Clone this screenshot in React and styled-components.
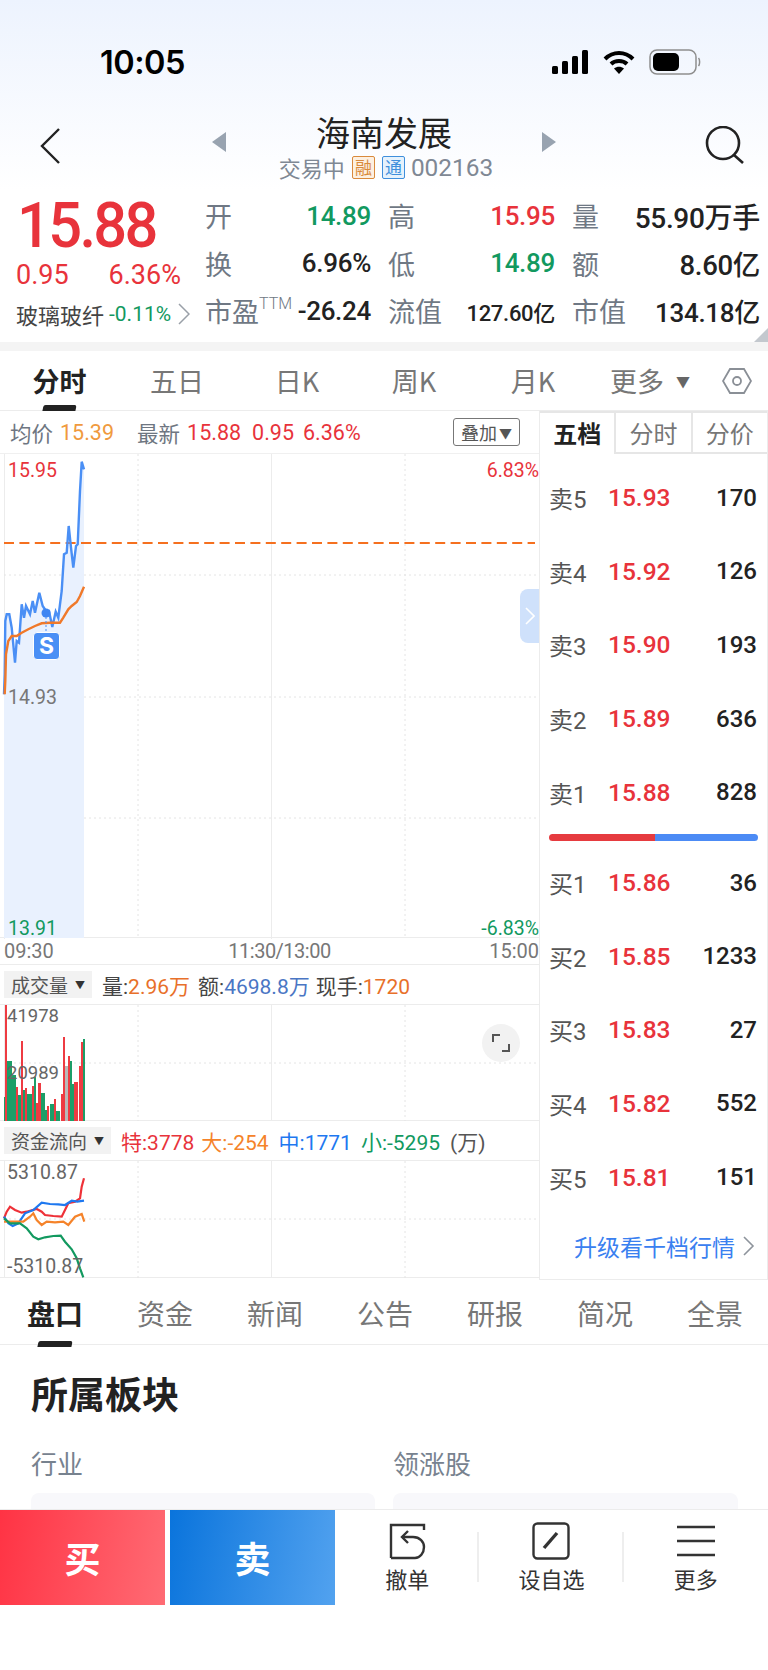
import React from "react";
import styled, { createGlobalStyle } from "styled-components";

const RED = "#e8333b";
const GREEN = "#12995f";
const GRAY = "#6e7681";
const DARK = "#222";
const LINE = "#ececec";

const GlobalStyle = createGlobalStyle`
    html, body {
        margin: 0;
        padding: 0;
        background: #fff;
    }
    * {
        box-sizing: border-box;
    }
`;

// points were read off 3x crops of the screen, so they go back through this
const pts = (list, top) =>
    list.map(([x, y]) => `${(x / 3).toFixed(1)},${(y / 3 + top).toFixed(1)}`).join(" ");

const PRICE_LINE = [[12,760],[14,700],[16,540],[20,520],[28,520],[35,560],[45,665],[50,600],[57,605],[65,490],[72,530],[78,495],[90,520],[98,480],[105,515],[118,455],[128,495],[138,510],[147,510],[157,558],[167,512],[175,530],[185,450],[192,340],[200,335],[206,255],[213,320],[220,380],[228,315],[233,310],[240,150],[245,62],[252,85]];
const AVG_LINE = [[14,760],[16,720],[18,640],[25,600],[35,585],[50,585],[65,575],[85,565],[105,555],[125,547],[150,545],[180,545],[190,530],[205,505],[215,495],[230,483],[240,465],[252,437]];

const VOLUME = [
    [12,16,320,"g"],[16,21,45,"r"],[22,35,212,"g"],[30,47,255,"g"],[47,55,290,"r"],[55,62,315,"g"],
    [62,68,153,"r"],[68,76,300,"g"],[76,82,295,"r"],[82,95,312,"g"],[96,102,288,"r"],[102,108,260,"g"],
    [108,115,338,"r"],[115,122,278,"r"],[122,135,310,"g"],[135,141,360,"g"],[141,148,347,"r"],[149,162,342,"g"],
    [162,168,327,"r"],[169,181,362,"g"],[182,189,313,"r"],[189,195,140,"r"],[195,203,227,"n"],[203,209,198,"r"],
    [209,215,213,"g"],[215,222,282,"g"],[222,235,277,"r"],[236,242,227,"r"],[242,249,157,"r"],[249,255,148,"g"],
];
const BAR_COLORS = { r: "#ee3b42", g: "#1c9e68", n: "#b9b9b9" };

const FLOW = [
    ["#ee3138", [[12,685],[20,665],[30,650],[45,660],[65,668],[80,665],[90,662],[110,657],[125,665],[135,675],[160,678],[185,680],[195,660],[205,640],[225,635],[240,625],[245,590],[252,565]]],
    ["#1e78f0", [[12,680],[25,700],[38,708],[55,700],[75,670],[100,660],[125,638],[150,642],[175,643],[195,645],[215,632],[232,635],[252,632]]],
    ["#f5832a", [[12,695],[30,695],[50,695],[70,695],[90,680],[100,670],[110,690],[125,705],[140,695],[165,697],[190,695],[205,705],[225,680],[245,672],[253,695]]],
    ["#12995f", [[12,685],[30,700],[60,700],[80,715],[100,740],[115,748],[135,742],[160,738],[182,737],[195,755],[215,778],[230,805],[240,835],[250,862]]],
];

const SELL = [["卖5", "15.93", "170"], ["卖4", "15.92", "126"], ["卖3", "15.90", "193"], ["卖2", "15.89", "636"], ["卖1", "15.88", "828"]];
const BUY = [["买1", "15.86", "36"], ["买2", "15.85", "1233"], ["买3", "15.83", "27"], ["买4", "15.82", "552"], ["买5", "15.81", "151"]];

function GridLines({ height, rows }) {
    return (
        <ChartSvg width="538" height={height}>
            {[138, 405].map((x) => (
                <line key={x} x1={x} x2={x} y1="0" y2={height} stroke="#e4e4e4" strokeDasharray="2 3" />
            ))}
            <line x1="271.5" x2="271.5" y1="0" y2={height} stroke="#ececec" />
            <line x1="4.5" x2="4.5" y1="0" y2={height} stroke="#ececec" />
            {rows.map((y) => (
                <line key={y} x1="4" x2="538" y1={y} y2={y} stroke="#e4e4e4" strokeDasharray="2 3" />
            ))}
        </ChartSvg>
    );
}

function DepthRows({ rows, top }) {
    return (
        <DepthList $top={top}>
            {rows.map(([name, price, qty]) => (
                <DepthRow key={name}>
                    <DepthName>{name}</DepthName>
                    <DepthPrice>{price}</DepthPrice>
                    <DepthQty>{qty}</DepthQty>
                </DepthRow>
            ))}
        </DepthList>
    );
}

export default function App() {
    return (
        <Page>
            <GlobalStyle />
            <Top>
                <StatusBar>
                    <Clock>10:05</Clock>
                    <StatusIcons>
                        <svg width="37" height="24" viewBox="0 0 37 24">
                            <rect x="0" y="16" width="6" height="8" rx="1.5" />
                            <rect x="10" y="11" width="6" height="13" rx="1.5" />
                            <rect x="20" y="6" width="6" height="18" rx="1.5" />
                            <rect x="30" y="0" width="6" height="24" rx="1.5" />
                        </svg>
                        <svg width="32" height="24" viewBox="0 0 32 24" fill="none" stroke="#000" strokeWidth="4">
                            <path d="M2 9 C10 1 22 1 30 9" />
                            <path d="M8 14 C12 10 20 10 24 14" />
                            <path d="M16 24 L11 18.5 C14 16 18 16 21 18.5 Z" fill="#000" stroke="none" />
                        </svg>
                        <svg width="52" height="26" viewBox="0 0 52 26" fill="none">
                            <rect x="1" y="1" width="46" height="24" rx="7" stroke="#8e8e8e" strokeWidth="1.5" />
                            <rect x="4" y="4" width="26" height="18" rx="5" fill="#000" />
                            <path d="M49.5 9 C51 10.5 51 15.5 49.5 17" stroke="#8e8e8e" strokeWidth="1.5" />
                        </svg>
                    </StatusIcons>
                </StatusBar>
                <Nav>
                    <NavIcon>
                        <svg width="20" height="36" viewBox="0 0 20 36" fill="none" stroke="#222" strokeWidth="2.4">
                            <path d="M19 1 L2 18 L19 35" />
                        </svg>
                    </NavIcon>
                    <Title>
                        <Triangle $dir="left" />
                        <TitleText>
                            <StockName>海南发展</StockName>
                            <SubLine>
                                <span>交易中</span>
                                <Badge $color="#d98a3c" $bg="#fdf0e1">融</Badge>
                                <Badge $color="#3f8fdc" $bg="#e6f2fc">通</Badge>
                                <Code>002163</Code>
                            </SubLine>
                        </TitleText>
                        <Triangle $dir="right" />
                    </Title>
                    <SearchSlot>
                        <svg width="40" height="38" viewBox="0 0 40 38" fill="none" stroke="#222" strokeWidth="2.6">
                            <circle cx="18" cy="17" r="16" />
                            <path d="M29 29 L38 37" />
                        </svg>
                    </SearchSlot>
                </Nav>
                <Quote>
                    <PriceBlock>
                        <BigPrice>15.88</BigPrice>
                        <ChangeRow>
                            <span>0.95</span>
                            <span>6.36%</span>
                        </ChangeRow>
                        <SectorRow>
                            <span>玻璃玻纤</span>
                            <SectorPct>-0.11%</SectorPct>
                            <svg width="12" height="22" viewBox="0 0 12 22" fill="none" stroke="#9aa0a8" strokeWidth="1.5">
                                <path d="M1 1 L11 11 L1 21" />
                            </svg>
                        </SectorRow>
                    </PriceBlock>
                    <QuoteGrid>
                        <QuoteCell>
                            <QuoteLabel>开</QuoteLabel>
                            <QuoteValue $color={GREEN}>14.89</QuoteValue>
                        </QuoteCell>
                        <QuoteCell>
                            <QuoteLabel>高</QuoteLabel>
                            <QuoteValue $color={RED}>15.95</QuoteValue>
                        </QuoteCell>
                        <QuoteCell>
                            <QuoteLabel>量</QuoteLabel>
                            <QuoteValue $color={DARK} $size={28}>55.90万手</QuoteValue>
                        </QuoteCell>
                        <QuoteCell>
                            <QuoteLabel>换</QuoteLabel>
                            <QuoteValue $color={DARK}>6.96%</QuoteValue>
                        </QuoteCell>
                        <QuoteCell>
                            <QuoteLabel>低</QuoteLabel>
                            <QuoteValue $color={GREEN}>14.89</QuoteValue>
                        </QuoteCell>
                        <QuoteCell>
                            <QuoteLabel>额</QuoteLabel>
                            <QuoteValue $color={DARK} $size={27.5}>8.60亿</QuoteValue>
                        </QuoteCell>
                        <QuoteCell>
                            <QuoteLabel>
                                市盈<Ttm>TTM</Ttm>
                            </QuoteLabel>
                            <QuoteValue $color={DARK}>-26.24</QuoteValue>
                        </QuoteCell>
                        <QuoteCell>
                            <QuoteLabel>流值</QuoteLabel>
                            <QuoteValue $color={DARK} $size={22}>127.60亿</QuoteValue>
                        </QuoteCell>
                        <QuoteCell>
                            <QuoteLabel>市值</QuoteLabel>
                            <QuoteValue $color={DARK}>134.18亿</QuoteValue>
                        </QuoteCell>
                    </QuoteGrid>
                    <CornerMark />
                </Quote>
            </Top>
            <Band />
            <PeriodTabs>
                <PeriodTab $width={119} $active>
                    分时
                    <Underline $w={33} />
                </PeriodTab>
                <PeriodTab $width={116}>五日</PeriodTab>
                <PeriodTab $width={124}>日K</PeriodTab>
                <PeriodTab $width={110}>周K</PeriodTab>
                <PeriodTab $width={128}>月K</PeriodTab>
                <PeriodTab $width={106}>
                    更多<MoreArrow>▼</MoreArrow>
                </PeriodTab>
                <HexIcon width="30" height="30" viewBox="0 0 30 30" fill="none" stroke="#8a8f96" strokeWidth="1.8">
                    <path d="M8 3 H22 L29 15 L22 27 H8 L1 15 Z" />
                    <circle cx="15" cy="15" r="4" />
                </HexIcon>
            </PeriodTabs>
            <Market>
                <ChartColumn>
                    <InfoRow>
                        <Info $color={GRAY}>均价</Info>
                        <Info $color="#f09a3e" $gap={7}>15.39</Info>
                        <Info $color={GRAY} $gap={23}>最新</Info>
                        <Info $color={RED} $gap={7}>15.88</Info>
                        <Info $color={RED} $gap={11}>0.95</Info>
                        <Info $color={RED} $gap={9}>6.36%</Info>
                        <OverlayButton>
                            叠加<span>▼</span>
                        </OverlayButton>
                    </InfoRow>
                    <MainPane>
                        <GridLines height={485} rows={[121, 243, 364]} />
                        <ChartSvg width="538" height="485">
                            <polygon points={`${pts(PRICE_LINE, -13)} 84,484 4,484`} fill="#e9f1fe" />
                            <line x1="4" x2="535" y1="89" y2="89" stroke="#f5701f" strokeWidth="2" strokeDasharray="10 5.4" />
                            <polyline points={pts(PRICE_LINE, -13)} fill="none" stroke="#4a8ff5" strokeWidth="2.4" />
                            <polyline points={pts(AVG_LINE, -13)} fill="none" stroke="#f0792a" strokeWidth="2.4" />
                            <circle cx="46" cy="159" r="4.5" fill="#3f86f2" />
                            <path d="M46 163 V178" stroke="#4a8ff5" strokeDasharray="2 2" />
                        </ChartSvg>
                        <SignalTag>S</SignalTag>
                        <AxisLabel $color={RED} $top={5} $left={8}>15.95</AxisLabel>
                        <AxisLabel $color={RED} $top={5} $right={0}>6.83%</AxisLabel>
                        <AxisLabel $color="#777" $top={232} $left={8}>14.93</AxisLabel>
                        <AxisLabel $color={GREEN} $top={463} $left={8}>13.91</AxisLabel>
                        <AxisLabel $color={GREEN} $top={463} $right={0}>-6.83%</AxisLabel>
                        <Handle>
                            <svg width="10" height="18" viewBox="0 0 10 18" fill="none" stroke="#fff" strokeWidth="1.6">
                                <path d="M1 1 L9 9 L1 17" />
                            </svg>
                        </Handle>
                    </MainPane>
                    <TimeAxis>
                        <span>09:30</span>
                        <MidTime>11:30/13:00</MidTime>
                        <span>15:00</span>
                    </TimeAxis>
                    <PaneHeader>
                        <Dropdown $width={88}>
                            成交量<small>▼</small>
                        </Dropdown>
                        <Stat $gap={10}>量:<Num $color="#e8702a">2.96万</Num></Stat>
                        <Stat $gap={8}>额:<Num $color="#4a76c4">4698.8万</Num></Stat>
                        <Stat $gap={6}>现手:<Num $color="#e8702a">1720</Num></Stat>
                    </PaneHeader>
                    <SubPane $height={116}>
                        <GridLines height={116} rows={[58]} />
                        <ChartSvg width="538" height="116" shapeRendering="crispEdges">
                            {VOLUME.map(([a, b, top, c]) => (
                                <rect key={a} x={a / 3} y={top / 3 - 15} width={(b - a) / 3} height={(393 - top) / 3} fill={BAR_COLORS[c]} />
                            ))}
                        </ChartSvg>
                        <SmallLabel $top={1}>41978</SmallLabel>
                        <SmallLabel $top={58}>20989</SmallLabel>
                        <ExpandButton>
                            <svg width="18" height="18" viewBox="0 0 18 18" fill="none" stroke="#555" strokeWidth="2">
                                <path d="M1 8 V1 H8 M17 10 V17 H10" />
                            </svg>
                        </ExpandButton>
                    </SubPane>
                    <PaneHeader>
                        <Dropdown $width={107}>
                            资金流向<small>▼</small>
                        </Dropdown>
                        <Num $color="#e8333b" $gap={10}>特:3778</Num>
                        <Num $color="#f5832a" $gap={7}>大:-254</Num>
                        <Num $color="#1e78f0" $gap={10}>中:1771</Num>
                        <Num $color="#12995f" $gap={9}>小:-5295</Num>
                        <Num $color="#555" $gap={10}>(万)</Num>
                    </PaneHeader>
                    <SubPane $height={117}>
                        <GridLines height={117} rows={[58]} />
                        <ChartSvg width="538" height="117">
                            {FLOW.map(([color, list]) => (
                                <polyline key={color} points={pts(list, -171)} fill="none" stroke={color} strokeWidth="2.2" />
                            ))}
                        </ChartSvg>
                        <SmallLabel $top={2} $size={19.5}>5310.87</SmallLabel>
                        <SmallLabel $top={96} $size={19.5}>-5310.87</SmallLabel>
                    </SubPane>
                </ChartColumn>
                <DepthPanel>
                    <DepthTabs>
                        <DepthTab $active>五档</DepthTab>
                        <DepthTab>分时</DepthTab>
                        <DepthTab>分价</DepthTab>
                    </DepthTabs>
                    <DepthRows rows={SELL} top={7} />
                    <RatioBar>
                        <RatioPart $color="#e63b3f" style={{ width: "50.5%" }} />
                        <RatioPart $color="#4c8bf5" style={{ width: "49.5%" }} />
                    </RatioBar>
                    <DepthRows rows={BUY} top={5} />
                    <UpgradeLink>
                        升级看千档行情
                        <svg width="13" height="20" viewBox="0 0 13 20" fill="none" stroke="#8e949c" strokeWidth="1.6">
                            <path d="M2 1 L11 10 L2 19" />
                        </svg>
                    </UpgradeLink>
                </DepthPanel>
            </Market>
            <InfoTabs>
                <InfoTab $active>
                    盘口
                    <Underline $w={34} />
                </InfoTab>
                <InfoTab>资金</InfoTab>
                <InfoTab>新闻</InfoTab>
                <InfoTab>公告</InfoTab>
                <InfoTab>研报</InfoTab>
                <InfoTab>简况</InfoTab>
                <InfoTab>全景</InfoTab>
            </InfoTabs>
            <Sector>
                <SectionTitle>所属板块</SectionTitle>
                <Columns>
                    <Column>
                        <ColumnLabel>行业</ColumnLabel>
                        <Card />
                    </Column>
                    <Column>
                        <ColumnLabel>领涨股</ColumnLabel>
                        <Card />
                    </Column>
                </Columns>
            </Sector>
            <ActionBar>
                <TradeButton $from="#ff3344" $to="#ff6b74">买</TradeButton>
                <TradeButton $from="#0a74dc" $to="#52a2ef">卖</TradeButton>
                <Action>
                    <svg width="38" height="38" viewBox="0 0 38 38" fill="none" stroke="#333" strokeWidth="2.4">
                        <path d="M3 36 V3 H36 V8 M3 36 H27" />
                        <path d="M20 9 L14 15 L20 21" />
                        <path d="M14 15 H25 C32 15 36 20 36 25 C36 31 32 36 27 36" />
                    </svg>
                    <ActionLabel>撤单</ActionLabel>
                </Action>
                <Divider />
                <Action>
                    <svg width="38" height="38" viewBox="0 0 38 38" fill="none" stroke="#333" strokeWidth="2.4">
                        <rect x="1.5" y="1.5" width="35" height="35" rx="4" />
                        <path d="M12 26 L25 11" strokeWidth="3.4" />
                    </svg>
                    <ActionLabel>设自选</ActionLabel>
                </Action>
                <Divider />
                <Action>
                    <svg width="38" height="38" viewBox="0 0 38 38" fill="none" stroke="#333" strokeWidth="2.6">
                        <path d="M0 5 H38 M0 19 H38 M0 33 H38" />
                    </svg>
                    <ActionLabel>更多</ActionLabel>
                </Action>
            </ActionBar>
        </Page>
    );
}

const CJK = `"Noto Sans CJK SC", sans-serif`;
const NUM = `Roboto, "Noto Sans CJK SC", sans-serif`;

const Page = styled.div`
    width: 768px;
    height: 1670px;
    overflow: hidden;
    background: #fff;
    font-family: ${NUM};
    color: ${DARK};
`;

const Top = styled.div`
    background: linear-gradient(180deg, #edf3fe 0%, #ffffff 100%);
    background-size: 100% 190px;
    background-repeat: no-repeat;
`;

const StatusBar = styled.div`
    display: flex;
    justify-content: space-between;
    align-items: center;
    height: 124px;
    padding: 0 67px 0 100px;
    margin-bottom: -14px;
`;

const Clock = styled.div`
    font-family: Inter, sans-serif;
    font-size: 32.5px;
    font-weight: 600;
    color: #000;
    letter-spacing: -0.5px;
`;

const StatusIcons = styled.div`
    display: flex;
    align-items: center;
    gap: 14px;
    fill: #000;
`;

const Nav = styled.div`
    display: grid;
    grid-template-columns: 172px 344px 1fr;
    align-items: start;
    height: 80px;
    padding: 2px 0 0 40px;
`;

const NavIcon = styled.div`
    display: flex;
    margin-top: 16px;
`;

const Title = styled.div`
    display: flex;
    align-items: flex-start;
    justify-content: space-between;
`;

const Triangle = styled.div`
    width: 0;
    height: 0;
    margin-top: 20px;
    border-top: 10px solid transparent;
    border-bottom: 10px solid transparent;
    ${(p) => (p.$dir === "left" ? "border-right" : "border-left")}: 14px solid #98a3b0;
`;

const TitleText = styled.div`
    display: flex;
    flex-direction: column;
    align-items: center;
`;

const StockName = styled.div`
    font-family: ${CJK};
    font-size: 34px;
    line-height: 40px;
    color: #222;
`;

const SubLine = styled.div`
    display: flex;
    align-items: center;
    height: 24px;
    margin-top: 3px;
    padding-left: 4px;
    font-family: ${CJK};
    font-size: 22px;
    color: #7f8894;
`;

const Badge = styled.span`
    width: 23px;
    height: 23px;
    margin-left: 7px;
    border: 1px solid ${(p) => p.$color};
    border-radius: 2px;
    background: ${(p) => p.$bg};
    color: ${(p) => p.$color};
    font-size: 17px;
    line-height: 20px;
    text-align: center;
`;

const Code = styled.span`
    margin-left: 6px;
    font-family: Roboto, sans-serif;
    font-size: 24.4px;
`;

const SearchSlot = styled.div`
    display: flex;
    margin-top: 14px;
    padding-left: 149px;
`;

const Quote = styled.div`
    position: relative;
    display: flex;
    height: 152px;
    padding: 2px 8px 0 16px;
`;

const PriceBlock = styled.div`
    width: 190px;
    display: flex;
    flex-direction: column;
`;

const BigPrice = styled.div`
    height: 63px;
    margin-left: 1px;
    font-size: 63px;
    line-height: 68px;
    font-weight: 500;
    color: ${RED};
    letter-spacing: -2.8px;
    transform: scaleX(0.945);
    transform-origin: left center;
`;

const ChangeRow = styled.div`
    display: flex;
    justify-content: space-between;
    width: 165px;
    height: 40px;
    font-size: 27px;
    line-height: 40px;
    color: ${RED};
`;

const SectorRow = styled.div`
    display: flex;
    align-items: center;
    height: 38px;
    font-family: ${CJK};
    font-size: 22px;
    color: #444;
    svg {
        margin-left: 7px;
    }
`;

const SectorPct = styled.span`
    margin-left: 5px;
    font-family: Roboto, sans-serif;
    font-size: 21px;
    color: ${GREEN};
`;

const QuoteGrid = styled.div`
    flex: 1;
    display: grid;
    grid-template-columns: 166px 167px 188px;
    column-gap: 17px;
    grid-auto-rows: 47.5px;
`;

const QuoteCell = styled.div`
    display: flex;
    justify-content: space-between;
    align-items: center;
`;

const QuoteLabel = styled.span`
    display: flex;
    font-family: ${CJK};
    font-size: 27px;
    color: #6f7884;
`;

const Ttm = styled.span`
    font-family: Roboto, sans-serif;
    font-size: 16px;
    font-weight: 300;
    line-height: 26px;
`;

const QuoteValue = styled.span`
    font-family: ${NUM};
    font-size: ${(p) => p.$size || 26}px;
    font-weight: 500;
    color: ${(p) => p.$color};
    letter-spacing: -0.3px;
`;

const CornerMark = styled.div`
    position: absolute;
    right: 0;
    bottom: 0;
    width: 0;
    height: 0;
    border-left: 14px solid transparent;
    border-bottom: 14px solid #c3c8ce;
`;

const Band = styled.div`
    height: 9px;
    background: #f4f4f4;
`;

const PeriodTabs = styled.div`
    display: flex;
    align-items: center;
    height: 60px;
    border-bottom: 1px solid ${LINE};
`;

const PeriodTab = styled.div`
    position: relative;
    display: flex;
    align-items: center;
    justify-content: center;
    width: ${(p) => p.$width}px;
    height: 59px;
    flex: none;
    font-family: ${CJK};
    font-size: 27px;
    font-weight: ${(p) => (p.$active ? 700 : 400)};
    color: ${(p) => (p.$active ? "#222" : "#777")};
`;

const Underline = styled.div`
    position: absolute;
    left: 50%;
    bottom: -1px;
    width: ${(p) => p.$w}px;
    height: 6px;
    margin-left: -${(p) => p.$w / 2}px;
    background: #222;
    border-radius: 2px 2px 0 0;
    transform: skewX(-12deg);
`;

const MoreArrow = styled.span`
    margin-left: 12px;
    font-size: 14px;
    line-height: 1;
    color: #666;
`;

const HexIcon = styled.svg`
    margin-left: 19px;
`;

const Market = styled.div`
    display: flex;
    height: 869px;
`;

const ChartColumn = styled.div`
    width: 539px;
    flex: none;
`;

const InfoRow = styled.div`
    display: flex;
    align-items: center;
    height: 42px;
    padding-left: 10px;
`;

const Info = styled.span`
    margin-left: ${(p) => p.$gap || 0}px;
    font-size: 21.5px;
    color: ${(p) => p.$color};
`;

const OverlayButton = styled.div`
    display: flex;
    align-items: center;
    justify-content: center;
    width: 67px;
    height: 28px;
    margin-left: auto;
    margin-right: 19px;
    border: 1px solid #777;
    border-radius: 3px;
    font-family: ${CJK};
    font-size: 18px;
    color: #555;
    span {
        font-size: 13px;
        margin-left: 2px;
    }
`;

const MainPane = styled.div`
    position: relative;
    height: 485px;
    border-top: 1px solid #f0f0f0;
    border-bottom: 1px solid ${LINE};
`;

const ChartSvg = styled.svg`
    position: absolute;
    left: 0;
    top: 0;
`;

const SignalTag = styled.div`
    position: absolute;
    left: 33px;
    top: 178px;
    width: 27px;
    height: 28px;
    border-radius: 4px;
    background: #4a8ff5;
    border: 1px solid #fff;
    color: #fff;
    font-family: Inter, sans-serif;
    font-size: 23px;
    font-weight: 700;
    line-height: 26px;
    text-align: center;
`;

const AxisLabel = styled.span`
    position: absolute;
    top: ${(p) => p.$top}px;
    ${(p) => (p.$left !== undefined ? `left: ${p.$left}px;` : `right: ${p.$right}px;`)}
    font-size: 19.5px;
    line-height: 23px;
    color: ${(p) => p.$color};
`;

const SmallLabel = styled.span`
    position: absolute;
    top: ${(p) => p.$top}px;
    left: 7px;
    font-size: ${(p) => p.$size || 18.5}px;
    line-height: 20px;
    color: #666;
`;

const Handle = styled.div`
    position: absolute;
    right: 0;
    top: 135px;
    width: 19px;
    height: 54px;
    display: flex;
    align-items: center;
    justify-content: center;
    background: #cfe1fb;
    border-radius: 8px 0 0 8px;
`;

const TimeAxis = styled.div`
    display: flex;
    justify-content: space-between;
    align-items: center;
    height: 27px;
    padding-left: 4px;
    font-size: 20px;
    color: #777;
    border-bottom: 1px solid ${LINE};
`;

const MidTime = styled.span`
    margin-left: 16px;
    letter-spacing: -0.5px;
`;

const PaneHeader = styled.div`
    display: flex;
    align-items: center;
    height: 40px;
    padding-left: 4px;
    border-bottom: 1px solid ${LINE};
    font-family: ${NUM};
    font-size: 21px;
    color: #555;
`;

const Dropdown = styled.div`
    display: flex;
    align-items: center;
    justify-content: space-between;
    width: ${(p) => p.$width}px;
    height: 27px;
    padding: 0 7px;
    background: #f2f2f2;
    font-family: ${CJK};
    font-size: 19px;
    color: #555;
    small {
        font-size: 10px;
        color: #333;
    }
`;

const Stat = styled.span`
    margin-left: ${(p) => p.$gap}px;
    color: #444;
`;

const Num = styled.span`
    margin-left: ${(p) => p.$gap || 0}px;
    color: ${(p) => p.$color};
`;

const SubPane = styled.div`
    position: relative;
    height: ${(p) => p.$height}px;
    border-bottom: 1px solid ${LINE};
`;

const ExpandButton = styled.div`
    position: absolute;
    left: 482px;
    top: 19px;
    width: 38px;
    height: 38px;
    display: flex;
    align-items: center;
    justify-content: center;
    border-radius: 50%;
    background: #f2f2f2;
`;

const DepthPanel = styled.div`
    flex: 1;
    display: flex;
    flex-direction: column;
    border-left: 1px solid ${LINE};
    border-right: 1px solid ${LINE};
    border-bottom: 1px solid ${LINE};
`;

const DepthTabs = styled.div`
    display: flex;
    height: 43px;
`;

const DepthTab = styled.div`
    flex: 1;
    text-align: center;
    font-family: ${CJK};
    font-size: 24px;
    line-height: 40px;
    font-weight: ${(p) => (p.$active ? 700 : 400)};
    color: ${(p) => (p.$active ? "#222" : "#777")};
    border-top: 2px solid #e6e6e6;
    ${(p) => !p.$active && "border-left: 2px solid #e6e6e6; border-bottom: 2px solid #e6e6e6;"}
`;

const DepthList = styled.div`
    display: grid;
    grid-auto-rows: 73.6px;
    margin-top: ${(p) => p.$top}px;
`;

const DepthRow = styled.div`
    display: flex;
    align-items: center;
    padding: 0 10px 0 9px;
    font-size: 24px;
`;

const DepthName = styled.span`
    width: 59px;
    color: #555;
`;

const DepthPrice = styled.span`
    color: ${RED};
    font-size: 24.5px;
    font-weight: 500;
`;

const DepthQty = styled.span`
    margin-left: auto;
    font-weight: 500;
    color: #222;
`;

const RatioBar = styled.div`
    display: flex;
    height: 7px;
    margin: 5px 9px 0;
    border-radius: 4px;
    overflow: hidden;
`;

const RatioPart = styled.div`
    background: ${(p) => p.$color};
`;

const UpgradeLink = styled.div`
    display: flex;
    align-items: center;
    justify-content: flex-end;
    gap: 7px;
    height: 66px;
    padding-right: 12px;
    font-family: ${CJK};
    font-size: 23px;
    color: #3a80f0;
`;

const InfoTabs = styled.div`
    display: grid;
    grid-template-columns: repeat(7, 110px);
    height: 65px;
    border-bottom: 1px solid ${LINE};
`;

const InfoTab = styled.div`
    position: relative;
    text-align: center;
    font-family: ${CJK};
    font-size: 28px;
    line-height: 66px;
    font-weight: ${(p) => (p.$active ? 700 : 400)};
    color: ${(p) => (p.$active ? "#222" : "#777")};
`;

const Sector = styled.div`
    height: 164px;
    padding: 22px 30px 0 31px;
    overflow: hidden;
`;

const SectionTitle = styled.div`
    font-family: ${CJK};
    font-size: 37px;
    line-height: 52px;
    font-weight: 700;
    color: #222;
`;

const Columns = styled.div`
    display: grid;
    grid-template-columns: 344px 345px;
    column-gap: 18px;
    margin-top: 26px;
`;

const Column = styled.div`
    display: flex;
    flex-direction: column;
`;

const ColumnLabel = styled.div`
    font-family: ${CJK};
    font-size: 26px;
    line-height: 36px;
    color: #77828f;
`;

const Card = styled.div`
    height: 40px;
    margin-top: 12px;
    background: #f8f8fb;
    border-radius: 8px 8px 0 0;
`;

const ActionBar = styled.div`
    display: flex;
    align-items: flex-start;
    height: 160px;
    border-top: 1px solid ${LINE};
    background: #fff;
`;

const TradeButton = styled.div`
    width: 165px;
    height: 95px;
    background: linear-gradient(100deg, ${(p) => p.$from}, ${(p) => p.$to});
    color: #fff;
    font-family: ${CJK};
    font-size: 36px;
    font-weight: 700;
    line-height: 95px;
    text-align: center;
    & + & {
        margin-left: 5px;
    }
`;

const Action = styled.div`
    flex: 1;
    display: flex;
    flex-direction: column;
    align-items: center;
    padding-top: 12px;
`;

const ActionLabel = styled.div`
    margin-top: 2px;
    font-family: ${CJK};
    font-size: 22px;
    line-height: 32px;
    color: #333;
`;

const Divider = styled.div`
    width: 2px;
    height: 50px;
    margin: 22px 0 0 -2px;
    background: #eee;
`;
